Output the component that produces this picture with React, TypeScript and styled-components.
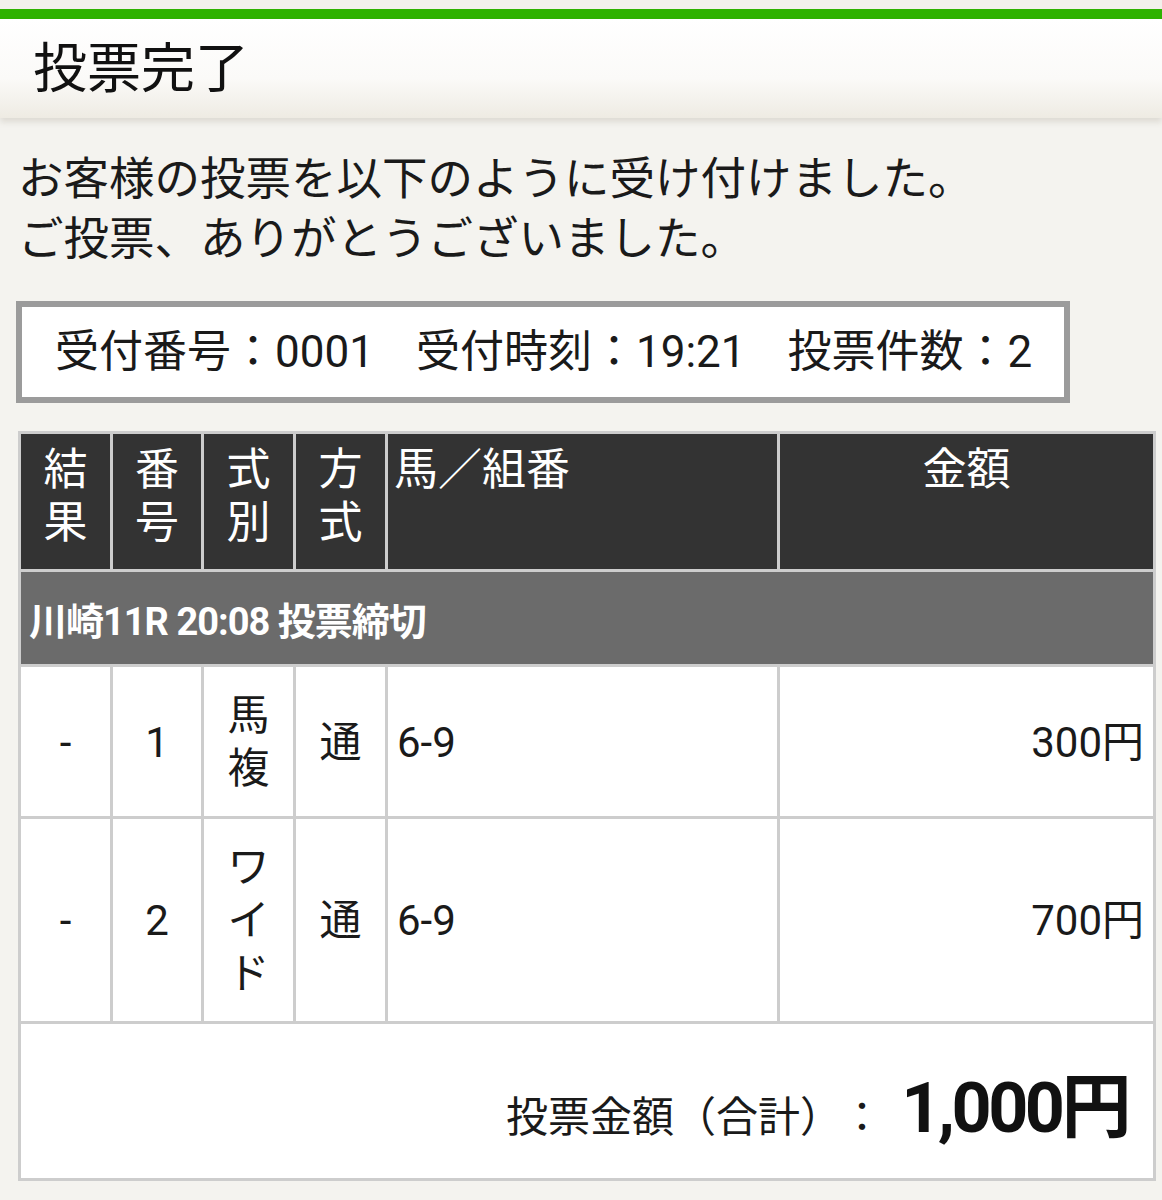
import styled, { createGlobalStyle } from "styled-components";

const GlobalStyle = createGlobalStyle`
  html, body {
    margin: 0;
    padding: 0;
    background: #f4f3ef;
  }
  body {
    font-family: Roboto, "Noto Sans CJK JP", sans-serif;
    color: #1a1a1a;
  }
`;

type Bet = {
  result: string;
  no: string;
  kind: string;
  method: string;
  horses: string;
  amount: string;
};

const bets: Bet[] = [
  { result: "-", no: "1", kind: "馬複", method: "通", horses: "6-9", amount: "300円" },
  { result: "-", no: "2", kind: "ワイド", method: "通", horses: "6-9", amount: "700円" }
];

// one character per line, like the narrow columns of the ticket table
const Stacked = ({ text }: { text: string }) => (
  <>
    {text.split("").map((c, i) => (
      <Char key={i}>{c}</Char>
    ))}
  </>
);

const App = () => {
  return (
    <Page>
      <GlobalStyle />
      <TopGap />
      <GreenBar />
      <TitleBar>
        <Title>投票完了</Title>
      </TitleBar>
      <Content>
        <Message>
          お客様の投票を以下のように受け付けました。
          <br />
          ご投票、ありがとうございました。
        </Message>
        <InfoBox>
          <InfoItem>受付番号：0001</InfoItem>
          <InfoItem>受付時刻：19:21</InfoItem>
          <InfoItem>投票件数：2</InfoItem>
        </InfoBox>
        <Table>
          <colgroup>
            <col style={{ width: 92 }} />
            <col style={{ width: 91 }} />
            <col style={{ width: 92 }} />
            <col style={{ width: 92 }} />
            <col style={{ width: 392 }} />
            <col />
          </colgroup>
          <thead>
            <tr>
              <HeadCell>
                <Stacked text="結果" />
              </HeadCell>
              <HeadCell>
                <Stacked text="番号" />
              </HeadCell>
              <HeadCell>
                <Stacked text="式別" />
              </HeadCell>
              <HeadCell>
                <Stacked text="方式" />
              </HeadCell>
              <HeadCell align="left">馬／組番</HeadCell>
              <HeadCell>金額</HeadCell>
            </tr>
          </thead>
          <tbody>
            <tr>
              <RaceCell colSpan={6}>川崎11R 20:08 投票締切</RaceCell>
            </tr>
            {bets.map((b) => (
              <tr key={b.no}>
                <Cell>{b.result}</Cell>
                <Cell>{b.no}</Cell>
                <Cell>
                  <Stacked text={b.kind} />
                </Cell>
                <Cell>{b.method}</Cell>
                <Cell align="left">{b.horses}</Cell>
                <Cell align="right">{b.amount}</Cell>
              </tr>
            ))}
            <tr>
              <TotalCell colSpan={6}>
                <TotalLabel>投票金額（合計）</TotalLabel>
                <TotalColon>：</TotalColon>
                <TotalValue>1,000円</TotalValue>
              </TotalCell>
            </tr>
          </tbody>
        </Table>
      </Content>
    </Page>
  );
};

export default App;

const Page = styled.div`
  width: 1162px;
  min-height: 1200px;
  background: #f4f3ef;
  overflow: hidden;
`;

const TopGap = styled.div`
  height: 9px;
  background: #f2f1ec;
`;

const GreenBar = styled.div`
  height: 10px;
  background: #2eb200;
`;

const TitleBar = styled.div`
  height: 99px;
  display: flex;
  align-items: center;
  padding-left: 33px;
  background: linear-gradient(#ffffff 0%, #fbfaf8 60%, #eeebe3 100%);
  box-shadow: 0 4px 6px rgba(120, 110, 90, 0.18);
`;

const Title = styled.h1`
  margin: 3px 0 0;
  font-size: 54px;
  font-weight: 400;
  line-height: 1;
  color: #111;
`;

const Content = styled.div`
  padding: 32px 6px 18px 18px;
`;

const Message = styled.p`
  margin: 0;
  font-size: 45.5px;
  line-height: 60px;
  color: #1a1a1a;
`;

const InfoBox = styled.div`
  margin: 31px 0 0 -2px;
  width: 1054px;
  height: 102px;
  box-sizing: border-box;
  border: 6px solid #9b9b9b;
  background: #fff;
  display: flex;
  align-items: center;
  gap: 42px;
  padding-left: 33px;
`;

const InfoItem = styled.span`
  font-size: 44px;
  line-height: 1;
  color: #1a1a1a;
`;

const Table = styled.table`
  margin-top: 28px;
  width: 1138px;
  table-layout: fixed;
  border-collapse: collapse;
  border: 3px solid #cdcdcd;
  background: #fff;
`;

const Char = styled.span`
  display: block;
`;

const HeadCell = styled.th<{ align?: "left" | "center" }>`
  background: #333333;
  color: #fff;
  font-weight: 400;
  font-size: 44px;
  line-height: 53px;
  height: 138px;
  box-sizing: border-box;
  vertical-align: top;
  padding: 10px 0 18px ${({ align }) => (align === "left" ? "6px" : "0")};
  text-align: ${({ align }) => align || "center"};
  border: 3px solid #cdcdcd;
`;

const RaceCell = styled.td`
  background: #6b6b6b;
  color: #fff;
  font-weight: 700;
  font-size: 38px;
  letter-spacing: -1px;
  height: 95px;
  box-sizing: border-box;
  padding: 0 0 0 8px;
  border: 3px solid #cdcdcd;
`;

const Cell = styled.td<{ align?: "left" | "right" | "center" }>`
  font-size: 42px;
  line-height: 53px;
  color: #1a1a1a;
  text-align: ${({ align }) => align || "center"};
  vertical-align: middle;
  padding: 22px ${({ align }) => (align === "right" ? "9px" : "0")} 21px
    ${({ align }) => (align === "left" ? "9px" : "0")};
  border: 3px solid #cdcdcd;
`;

const TotalCell = styled.td`
  height: 157px;
  box-sizing: border-box;
  text-align: right;
  vertical-align: middle;
  padding: 0 25px 0 0;
  border: 3px solid #cdcdcd;
  white-space: nowrap;
`;

const TotalLabel = styled.span`
  font-size: 42px;
  color: #1a1a1a;
`;

const TotalColon = styled.span`
  font-size: 42px;
  color: #1a1a1a;
  margin: 0 18px 0 20px;
`;

const TotalValue = styled.span`
  font-size: 70px;
  font-weight: 700;
  color: #111;
  letter-spacing: -3.5px;
`;
